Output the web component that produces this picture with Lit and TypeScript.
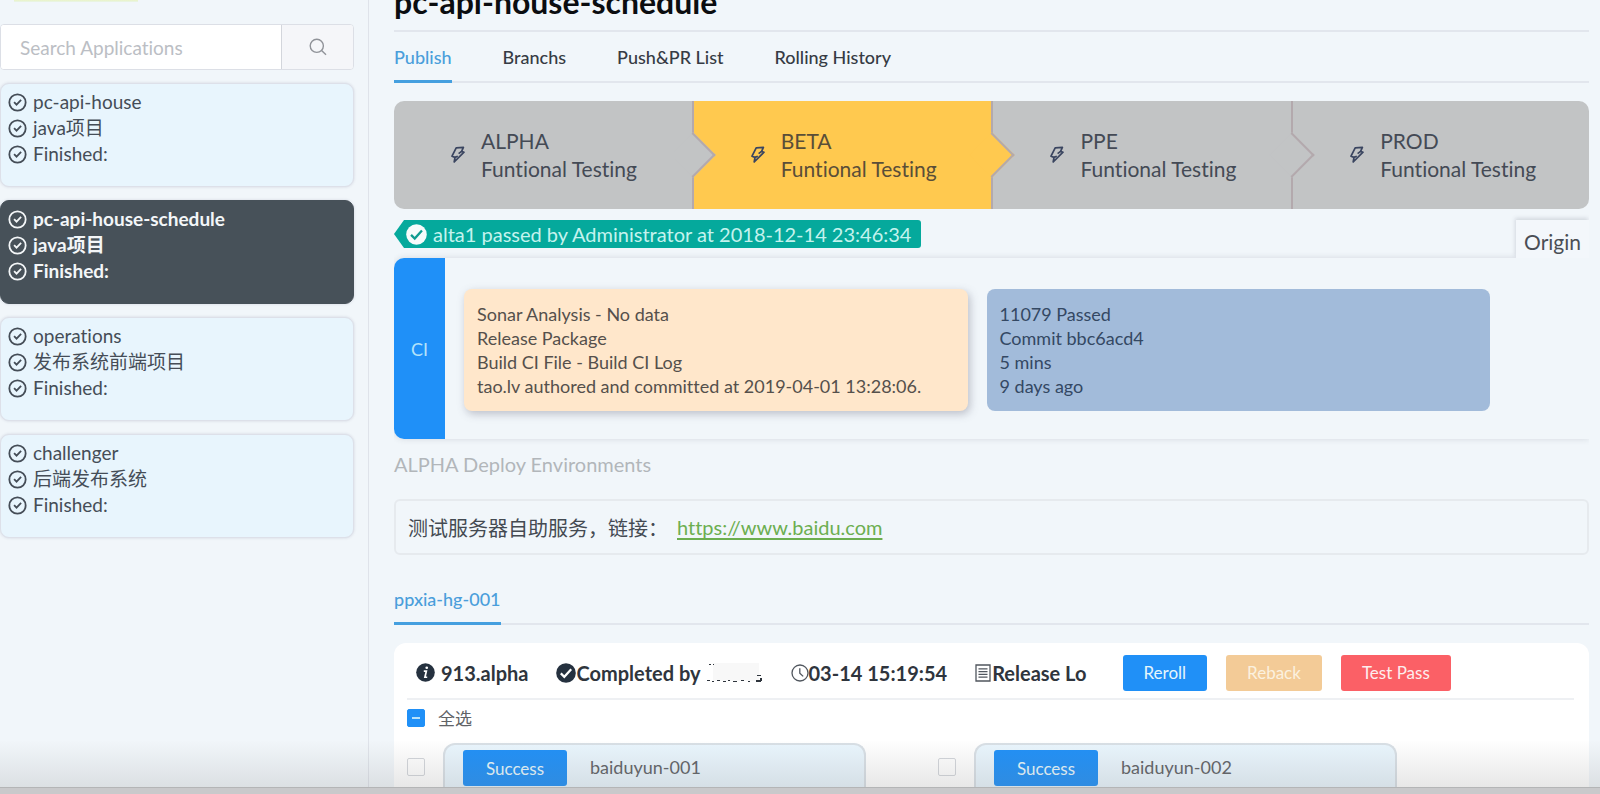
import { LitElement, html, css } from "lit";
import { customElement, property, state } from "lit/decorators.js";
import { classMap } from "lit/directives/class-map.js";

const FONT = css`Lato, "Noto Sans CJK SC", sans-serif`;

const checkRing = html`<svg class="ring" viewBox="0 0 20 20" width="19" height="19" fill="none" stroke="currentColor" stroke-width="1.9" aria-hidden="true">
  <circle cx="10" cy="10" r="8.6"></circle>
  <path d="M6.4 9.6l2.6 2.7 4.8-5"></path>
</svg>`;

const checkSolid = (disc: string, tick: string, size: number) => html`<svg viewBox="0 0 20 20" width=${size} height=${size} aria-hidden="true">
  <circle cx="10" cy="10" r="9.8" fill=${disc}></circle>
  <path d="M4.8 10.4l3.5 3.4 6.9-7.6" fill="none" stroke=${tick} stroke-width="2.2"></path>
</svg>`;

const bolt = html`<svg viewBox="0 0 14 18" width="14" height="18" fill="none" stroke="#3a4560" stroke-width="1.7" stroke-linejoin="round" aria-hidden="true">
  <path d="M5.2 1.8L12.4 1.4 10.6 5.4 13 6.2 3.2 16 4 11.4 1 10.2z"></path>
  <path d="M10.6 5.4L7.6 7.6M4 11.4l2.8-1.2"></path>
</svg>`;

interface App { name: string; desc: string; }

@customElement("app-sidebar")
class AppSidebar extends LitElement {
  @state() private selected = 1;

  private apps: App[] = [
    { name: "pc-api-house", desc: "java项目" },
    { name: "pc-api-house-schedule", desc: "java项目" },
    { name: "operations", desc: "发布系统前端项目" },
    { name: "challenger", desc: "后端发布系统" },
  ];

  static styles = css`
    :host { display: block; box-sizing: border-box; width: 369px; flex: none; border-right: 1px solid #dfe3ea; padding-right: 14px; font-family: ${FONT}; }
    .sliver { height: 2px; width: 124px; margin: 0 0 22px 14px; background: linear-gradient(#eaf3c4, #e9f4ea); }
    .search { display: flex; height: 46px; box-sizing: border-box; border: 1px solid #dcdfe6; border-radius: 4px; overflow: hidden; background: #fff; }
    .search input { flex: 1; min-width: 0; border: 0; outline: 0; padding: 0 19px; background: #fff; color: #4a4f57; font: 19px ${FONT}; font-variant-ligatures: none; }
    .search input::placeholder { color: #bbbec4; opacity: 1; }
    .search button { width: 72px; border: 0; border-left: 1px solid #d3d6dc; background: #f5f6f9; color: #909399; display: grid; place-items: center; padding: 0; }
    .list { display: flex; flex-direction: column; gap: 13px; margin: 13px 0 0; padding: 0; list-style: none; }
    .card { display: flex; flex-direction: column; width: 100%; box-sizing: border-box; height: 104px; padding: 5px 7px; text-align: left; border: 1px solid #dde0e9; border-radius: 9px; background: #e8f5fd; color: #454d57; font: 19px/26px ${FONT}; font-variant-ligatures: none; box-shadow: 0 0 3px rgba(90, 90, 120, .2); }
    .card.on { background: #475159; border-color: #475159; color: #f3f6f8; font-weight: 700; }
    .line { display: flex; align-items: center; gap: 6px; height: 26px; }
    .ring { flex: none; }
  `;

  render() {
    return html`
      <div class="sliver"></div>
      <form class="search" @submit=${(e: Event) => e.preventDefault()}>
        <input type="text" placeholder="Search Applications" aria-label="Search Applications" />
        <button type="submit" aria-label="Search">
          <svg viewBox="0 0 18 18" width="18" height="18" fill="none" stroke="currentColor" stroke-width="1.4" aria-hidden="true">
            <circle cx="7.8" cy="7.8" r="6.6"></circle><path d="M12.6 12.6l4.4 4.2"></path>
          </svg>
        </button>
      </form>
      <ul class="list">
        ${this.apps.map((app, i) => html`<li>
          <button class=${classMap({ card: true, on: i === this.selected })} @click=${() => (this.selected = i)}>
            ${[app.name, app.desc, "Finished:"].map((t) => html`<span class="line">${checkRing}<span>${t}</span></span>`)}
          </button>
        </li>`)}
      </ul>`;
  }
}

@customElement("stage-steps")
class StageSteps extends LitElement {
  private stages = ["ALPHA", "BETA", "PPE", "PROD"];
  @property() current = "BETA";

  static styles = css`
    :host { display: block; font-family: ${FONT}; }
    .steps { display: grid; grid-template-columns: repeat(3, 300fr) 296fr; margin: 0; padding: 0; list-style: none; border-radius: 10px; overflow: hidden; }
    .step { position: relative; display: flex; align-items: center; gap: 16px; box-sizing: border-box; height: 108px; padding-left: 57px; background: #c2c4c5; border-right: 2px solid #b3a9ad; color: #444a55; font-size: 21px; line-height: 28px; }
    .step.on { background: #ffc94f; color: #5a4e38; }
    .step:last-child { border-right: 0; }
    .step:not(:last-child)::after { content: ""; position: absolute; z-index: 1; right: -17px; top: 38px; width: 32px; height: 32px; box-sizing: border-box; background: inherit; border: solid #b3a9ad; border-width: 2px 2px 0 0; transform: rotate(45deg); }
  `;

  render() {
    return html`<ol class="steps">
      ${this.stages.map((s) => html`<li class=${classMap({ step: true, on: s === this.current })}>
        ${bolt}<div><div>${s}</div><div>Funtional Testing</div></div>
      </li>`)}
    </ol>`;
  }
}

@customElement("deploy-panel")
class DeployPanel extends LitElement {
  private hosts = ["baiduyun-001", "baiduyun-002"];

  static styles = css`
    :host { display: block; font-family: ${FONT}; color: #606266; }
    .panel { background: #fff; border-radius: 12px; padding: 0 15px 0 13px; height: 220px; }
    .bar { display: flex; align-items: center; height: 57px; box-sizing: border-box; padding: 4px 0 0 9px; border-bottom: 2px solid #eef0f3; font-size: 20px; font-weight: 700; color: #2f353d; white-space: nowrap; }
    .item { display: flex; align-items: center; margin-right: 28px; }
    .item.spaced { gap: 6px; }
    .mask { width: 56px; height: 19px; margin-left: 6px; }
    .btn { height: 36px; padding: 0 21px; border: 0; border-radius: 3px; color: #e6f6fb; font: 17px ${FONT}; }
    .acts { display: flex; gap: 19px; margin-left: 8px; }
    .blue { background: #2090f7; }
    .sand { background: #f3cb97; color: #fbf1df; }
    .red { background: #fb6066; color: #fdeeee; }
    .all { display: flex; align-items: center; gap: 13px; height: 35px; font-size: 17px; }
    .box { appearance: none; flex: none; width: 18px; height: 18px; margin: 0; border: 1px solid #d3d6db; border-radius: 2px; background: #fff; display: grid; place-items: center; }
    .box:indeterminate, .box:checked { background: #2090f7; border-color: #2090f7; }
    .box:indeterminate::before { content: ""; width: 8px; height: 2px; background: #b8e2fb; }
    .hosts { display: grid; grid-template-columns: 1fr 1fr; margin-top: 8px; padding-right: 105px; }
    .host { display: flex; align-items: center; gap: 18px; padding-right: 72px; }
    .hc { flex: 1; display: flex; align-items: flex-start; gap: 23px; box-sizing: border-box; height: 48px; padding: 5px 18px; border: 2px solid #d8dfe5; border-bottom: 0; border-radius: 12px 12px 0 0; background: #e9f5fd; font-size: 18px; line-height: 34px; }
    .hc .btn { width: 104px; padding: 0; }
  `;

  render() {
    return html`<section class="panel">
      <div class="bar">
        <span class="item spaced">
          <svg viewBox="0 0 20 20" width="19" height="19" aria-hidden="true"><circle cx="10" cy="10" r="9.8" fill="#25313f"></circle>
            <circle cx="11.3" cy="5" r="1.4" fill="#fff"></circle><path d="M8.2 8.6h2.7L9.4 15h2.4" fill="none" stroke="#fff" stroke-width="1.8"></path></svg>
          913.alpha
        </span>
        <span class="item">${checkSolid("#25313f", "#fff", 20)}Completed by
          <svg class="mask" viewBox="0 0 56 19" aria-hidden="true">
            <path fill="#f8f8f8" d="M6 0h46v18H6z"></path>
            <path fill="#2f353d" d="M2 1h2v1H2zM6 1h1v1H6zM0 17h3v1H0zM5 18h2v1H5zM10 17h3v1h-3zM16 18h3v1h-3zM21 17h2v1h-2zM26 18h4v1h-4zM34 17h3v1h-3zM41 18h2v1h-2zM50 12h4v1h-4zM53 15h2v3h-2zM49 17h5v2h-5z"></path>
          </svg>
        </span>
        <span class="item">
          <svg viewBox="0 0 18 18" width="18" height="18" fill="none" stroke="#50565e" stroke-width="1.3" aria-hidden="true"><circle cx="9" cy="9" r="8"></circle><path d="M8.8 4.2v5l3.4 3.2"></path></svg>03-14 15:19:54
        </span>
        <span class="item">
          <svg viewBox="0 0 17 18" width="17" height="18" fill="none" stroke="#50565e" stroke-width="1.3" aria-hidden="true"><path d="M1 1h14v16H1zM3.5 4.8h9M3.5 7.6h9M3.5 10.4h9M3.5 13.2h9"></path></svg>Release Lo
        </span>
        <span class="acts">
          <button class="btn blue">Reroll</button>
          <button class="btn sand">Reback</button>
          <button class="btn red">Test Pass</button>
        </span>
      </div>
      <label class="all"><input class="box" type="checkbox" .indeterminate=${true} />全选</label>
      <div class="hosts">
        ${this.hosts.map((h) => html`<div class="host">
          <input class="box" type="checkbox" aria-label=${h} />
          <div class="hc"><button class="btn blue">Success</button><span>${h}</span></div>
        </div>`)}
      </div>
    </section>`;
  }
}

@customElement("app-root")
class AppRoot extends LitElement {
  @state() private tab = "Publish";
  private tabs = ["Publish", "Branchs", "Push&PR List", "Rolling History"];

  static styles = css`
    :host { display: flex; position: relative; height: 100vh; overflow: hidden; background: #f1f6fa; font-family: ${FONT}; font-variant-ligatures: none; color: #444a52; }
    main { flex: 1; min-width: 0; padding: 0 11px 0 25px; }
    h1 { margin: -16px 0 0; padding-bottom: 10px; border-bottom: 2px solid #e2e6ed; font-size: 32px; line-height: 36px; font-weight: 700; color: #0b0d10; }
    .tabs { display: flex; gap: 51px; height: 51px; box-sizing: border-box; box-shadow: inset 0 -2px #e2e6ed; }
    .tab { border: 0; border-bottom: 3px solid transparent; padding: 2px 0 0; background: none; color: #363b44; font: 500 18px ${FONT}; }
    .tab.on { color: #4a9edb; border-color: #459fdf; }
    .env { height: 48px; margin-top: 22px; }
    .env .tab { padding: 0 0 2px; }
    stage-steps { margin-top: 18px; }
    .pass { display: flex; justify-content: space-between; align-items: flex-start; margin-top: 11px; }
    .flag { display: flex; align-items: center; gap: 6px; height: 28px; padding: 0 10px 0 12px; background: #05a99c; color: #c4f3ee; font-size: 20px; line-height: 26px; border-radius: 3px; clip-path: polygon(0 50%, 10px 0, 100% 0, 100% 100%, 10px 100%); }
    .origin { position: relative; z-index: 1; height: 38px; box-sizing: border-box; padding: 6px 8px 0; border: 0; background: #f3f7fb; color: #4a4e55; font: 21px/28px ${FONT}; box-shadow: -1px -2px 4px rgba(60, 70, 90, .16); clip-path: inset(-6px 0 0 -6px); }
    .ci { display: grid; grid-template-columns: 51px minmax(0, 1fr) minmax(0, 1fr) 80px; column-gap: 19px; align-items: start; height: 181px; border-radius: 10px 0 0 10px; box-shadow: 0 0 6px rgba(60, 70, 90, .16); clip-path: inset(-8px 0 -8px 0); }
    .label { align-self: stretch; display: grid; place-items: center; border-radius: 10px 0 0 10px; background: #1f90f8; color: #b4e3fa; font-size: 18px; }
    .info { box-sizing: border-box; margin-top: 31px; padding: 13px; border-radius: 8px; font-size: 18px; line-height: 24px; white-space: nowrap; }
    .peach { background: #ffe7cb; color: #55504c; box-shadow: 2px 3px 8px rgba(90, 90, 110, .35); }
    .steel { background: #a2bbda; color: #344863; }
    .cap { margin: 11px 0 21px; font-size: 20px; line-height: 28px; font-weight: 400; color: #b2b6ba; }
    .note { display: flex; align-items: center; gap: 9px; height: 56px; box-sizing: border-box; padding: 0 12px; border: 2px solid #e6eaee; border-radius: 6px; font-size: 20px; }
    .note a { color: #6cae50; text-underline-offset: 3px; }
    deploy-panel { margin-top: 18px; }
    .fade { position: absolute; left: 0; right: 0; bottom: 0; height: 54px; pointer-events: none; background: linear-gradient(rgba(120, 120, 120, 0), rgba(120, 120, 120, .2)); }
    .edge { position: absolute; left: 0; right: 0; bottom: 0; height: 7px; background: #c9c9cb; border-top: 1px solid #b4b5b6; box-sizing: border-box; }
  `;

  render() {
    return html`
      <app-sidebar></app-sidebar>
      <main>
        <h1>pc-api-house-schedule</h1>
        <nav class="tabs">
          ${this.tabs.map((t) => html`<button class=${classMap({ tab: true, on: t === this.tab })} @click=${() => (this.tab = t)}>${t}</button>`)}
        </nav>
        <stage-steps current="BETA"></stage-steps>
        <div class="pass">
          <div class="flag">${checkSolid("#f6fbfb", "#0f9c90", 21)}<span>alta1 passed by Administrator at 2018-12-14 23:46:34</span></div>
          <button class="origin">Origin</button>
        </div>
        <section class="ci">
          <div class="label">CI</div>
          <div class="info peach">
            <div>Sonar Analysis - No data</div>
            <div>Release Package</div>
            <div>Build CI File - Build CI Log</div>
            <div>tao.lv authored and committed at 2019-04-01 13:28:06.</div>
          </div>
          <div class="info steel">
            <div>11079 Passed</div>
            <div>Commit bbc6acd4</div>
            <div>5 mins</div>
            <div>9 days ago</div>
          </div>
        </section>
        <h2 class="cap">ALPHA Deploy Environments</h2>
        <div class="note"><span>测试服务器自助服务，链接：</span><a href="https://www.baidu.com">https://www.baidu.com</a></div>
        <nav class="tabs env"><button class="tab on">ppxia-hg-001</button></nav>
        <deploy-panel></deploy-panel>
      </main>
      <div class="fade"></div>
      <div class="edge"></div>`;
  }
}
